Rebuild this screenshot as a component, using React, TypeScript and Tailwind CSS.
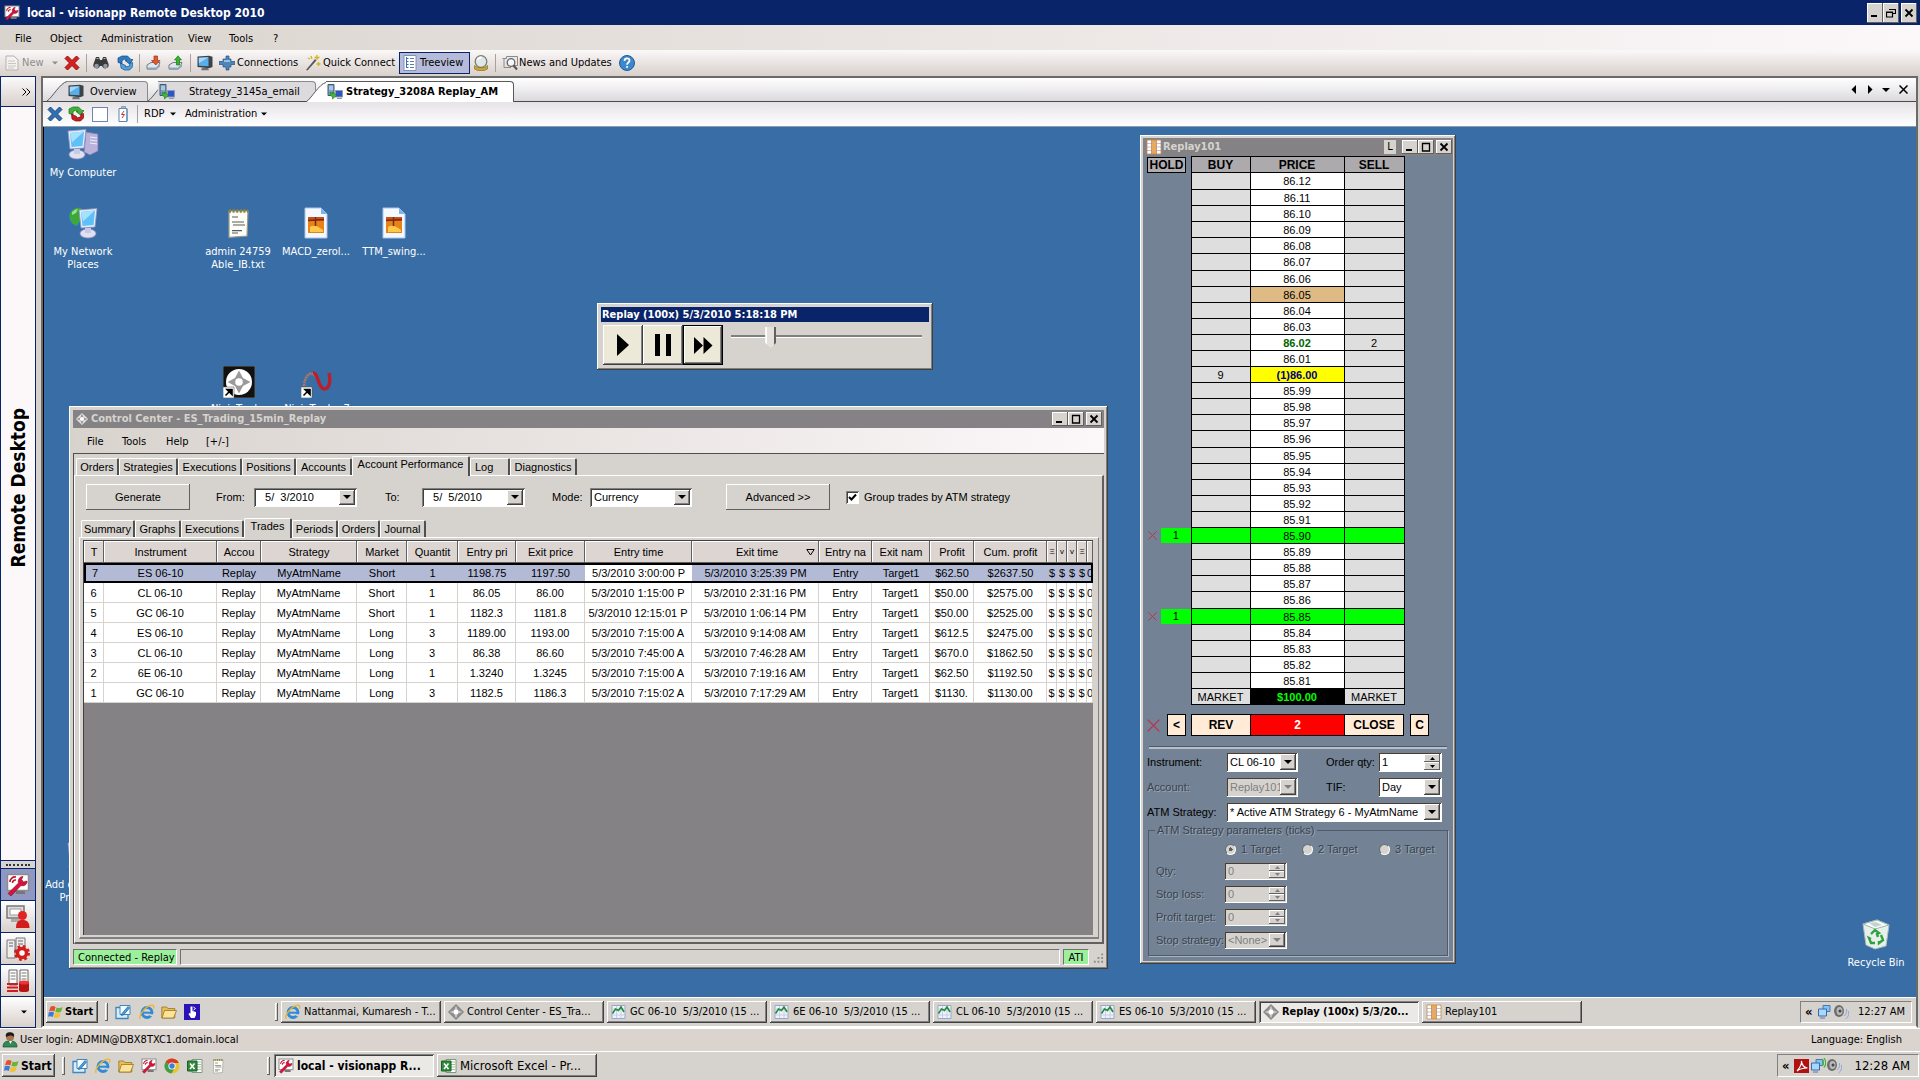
import type { ReactNode } from "react";

const raised =
  "shadow-[inset_-1px_-1px_0_#404040,inset_1px_1px_0_#ffffff,inset_-2px_-2px_0_#808080]";
const thinRaised = "shadow-[inset_-1px_-1px_0_#606060,inset_1px_1px_0_#ffffff]";
const sunken =
  "shadow-[inset_1px_1px_0_#808080,inset_-1px_-1px_0_#ffffff,inset_2px_2px_0_#404040]";
const sans = "font-[family-name:'Liberation_Sans',Arial,sans-serif]";
const emboss = "text-[#39424e] [text-shadow:1px_1px_0_#9aa6b5]";

/* ---------- icons ---------- */

function Svg({ size = 16, box = 16, children }: { size?: number; box?: number; children: ReactNode }) {
  return (
    <svg width={size} height={size} viewBox={`0 0 ${box} ${box}`} className="shrink-0" aria-hidden="true">
      {children}
    </svg>
  );
}

const WrenchIcon = ({ size = 16 }: { size?: number }) => (
  <Svg size={size} box={24}>
    <rect x="1.5" y="1.5" width="21" height="16" fill="#fff" stroke="#8d8d8d" strokeWidth="1.5" />
    <path d="M10 18h9v3h-9z" fill="#777" />
    <path d="M4 9a5 5 0 0 1 6-5M6.500 10a3 3 0 0 1 3.500-3" fill="none" stroke="#c8102e" strokeWidth="1.6" />
    <path d="M2 20.500 12.500 10c-1-3 1-6.500 4.500-6.500l-1.500 3 2 2.500 3.500-1c.5 3.500-3 5.500-6 4.500L5 23z" fill="#d4143c" stroke="#8d0a22" strokeWidth=".6" />
  </Svg>
);
const PageIcon = () => (
  <Svg>
    <path d="M2 1h8l4 4v10H2z" fill="#f4f2f1" stroke="#b5b1ae" />
    <path d="M4 6h7M4 8.500h8M4 11h8M4 13h6" stroke="#c9c5c2" />
  </Svg>
);
const CrossIcon = ({ color, edge }: { color: string; edge: string }) => (
  <Svg>
    <path d="M1 3.500 3.500 1 8 5.500 12.500 1 15 3.500 10.500 8l4.500 4.500-2.500 2.500L8 10.500 3.500 15 1 12.500 5.500 8z" fill={color} stroke={edge} />
  </Svg>
);
const BinocularsIcon = () => (
  <Svg>
    <path d="M3 2h3l1 3h2l1-3h3l2.500 7a3.300 3.300 0 1 1-6.500 2h-2a3.300 3.300 0 1 1-6.500-2z" fill="#3a3a3c" />
    <circle cx="3.600" cy="11" r="2.200" fill="#8d99a5" /><circle cx="12.400" cy="11" r="2.200" fill="#8d99a5" />
    <path d="M3.500 3.500h2M10.500 3.500h2" stroke="#b8b8b8" />
  </Svg>
);
const RefreshIcon = () => (
  <Svg>
    <path d="M1 7.500V3l4-2h5.500L14 4.500h2L12.500 9 8 5.500h2L8 4 5 5.500v3z" fill="#2c7cc4" stroke="#134a84" strokeWidth=".7" />
    <path d="M3.500 8l5 2.500V12l4-1 .5-3 2.500-.5.500 4-3.500 3.500H7.500L4 13z" fill="#4fa2e2" stroke="#134a84" strokeWidth=".7" />
  </Svg>
);
const ReconnectIcon = () => (
  <Svg>
    <path d="M1 7.500V3l4-2h5.500L14 4.500h2L12.500 9 8 5.500h2L8 4 5 5.500v3z" fill="#3fb23a" stroke="#1b6d18" strokeWidth=".7" />
    <path d="M3.500 8l5 2.500V12l4-1 .5-3 2.500-.5.500 4-3.500 3.500H7.500L4 13z" fill="#c9211e" stroke="#7b0b0b" strokeWidth=".7" />
  </Svg>
);
const TrayIcon = ({ up }: { up?: boolean }) => (
  <Svg>
    <path d="M1 10l4-2.500h9l-2 4.500-2 2H1z" fill="#dfe6ec" stroke="#6f7b86" />
    <path d="M1 12.500h9l4-4v3l-4 3.500H1z" fill="#8fa6ba" />
    {up ? (
      <path d="M8.500 10V5H6.500L10 .8 13.500 5h-2v5z" fill="#37b52e" stroke="#1c7a17" strokeWidth=".7" />
    ) : (
      <path d="M8 1h3.500v4.500H14L9.800 10 5.500 5.500H8z" fill="#e2582a" stroke="#9a3512" strokeWidth=".7" />
    )}
  </Svg>
);
const MonitorIcon = () => (
  <Svg>
    <path d="M.5 1.500 12 .8l3.500 1V12l-3.500 1.200L.5 12z" fill="#3c4248" />
    <path d="M1.800 2.800l9.700-.5v9L1.800 10.800z" fill="#58aee8" />
    <path d="M1.800 2.800l9.700-.5-9.700 6z" fill="#a8d8f8" />
    <path d="M5 13h6l1 2.200H4z" fill="#6c7278" />
  </Svg>
);
const PlugIcon = () => (
  <Svg>
    <path d="M0 6.500h4V4h3V1h3v3h2v2.500h4v3h-4V12h-2v3H7v-3H4V9.500H0z" fill="#4f86b8" stroke="#2a5480" strokeWidth=".7" />
    <path d="M5 6h6" stroke="#b5d3ec" strokeWidth="1.500" />
  </Svg>
);
const WandIcon = () => (
  <Svg>
    <path d="M1 15 10 4l1.500 1.500L2.500 15.500z" fill="#5a5a5a" />
    <path d="M12 0v5M9.500 2.500h5M6 1l1 3M13.500 7v4M11.500 9h4M3 3l2 1" stroke="#d3b21c" strokeWidth="1.300" />
  </Svg>
);
const TreeIcon = () => (
  <Svg>
    <path d="M2 .5h12v15H2z" fill="#fff" stroke="#7d93b8" />
    <path d="M4.500 2v11M4.500 3.500h2M4.500 6.500h2M4.500 9.500h2M4.500 12.500h2" stroke="#3b6fb5" />
    <path d="M8 3.500h4M8 6.500h4M8 9.500h4M8 12.500h4" stroke="#5f7fa8" />
  </Svg>
);
const BulbIcon = () => (
  <Svg>
    <circle cx="8" cy="6.500" r="5.800" fill="#dde7ea" stroke="#7b7d70" strokeWidth="1.300" />
    <path d="M4.500 5a4 4 0 0 1 4-2.500" stroke="#fff" strokeWidth="1.800" fill="none" />
    <path d="M1.500 10.500l3 2h7l3-2v3.500l-3 1.500h-7l-3-1.500z" fill="#c5a53a" stroke="#7f6817" strokeWidth=".6" />
  </Svg>
);
const NewsIcon = () => (
  <Svg>
    <path d="M.5 3.500h4v-2h11v9h-3" fill="#e9e9e9" stroke="#8a8a8a" />
    <path d="M2 3.500v9h7" fill="none" stroke="#8a8a8a" />
    <circle cx="9" cy="7.500" r="3.800" fill="#f5f8fa" stroke="#666" strokeWidth="1.300" />
    <path d="M11.500 10.500l3.500 4" stroke="#555" strokeWidth="2" />
  </Svg>
);
const HelpIcon = () => (
  <Svg>
    <circle cx="8" cy="8" r="7.500" fill="#3d87cc" stroke="#1f5c99" />
    <path d="M5.500 6c0-3.500 5-3.200 5-.3 0 1.800-2.500 1.900-2.500 4" fill="none" stroke="#fff" strokeWidth="1.700" />
    <rect x="7.200" y="11" width="1.800" height="1.800" fill="#fff" />
  </Svg>
);
const ServerIcon = () => (
  <Svg>
    <path d="M1 .5h6v11H1z" fill="#7ea3c4" stroke="#3b5a78" />
    <path d="M2 3h4M2 5h4" stroke="#dce9f4" />
    <path d="M8.500 6.500h7v6.500h-7z" fill="#2c55c8" stroke="#8f98ac" />
    <path d="M10 14.500h5" stroke="#8f98ac" />
    <path d="M3 8.500c0 3 1 4 2.500 4V15l4-3.500-4-3.500v2C4.500 10 4 9.500 4 8z" fill="#46b83a" stroke="#1c7417" strokeWidth=".6" />
  </Svg>
);
const DeviceIcon = () => (
  <Svg>
    <path d="M4 2.500h8v13H4z" fill="#fff" stroke="#5b89ad" />
    <path d="M6.500.5h4v2h-4z" fill="#9fc0d6" stroke="#5b89ad" strokeWidth=".7" />
    <path d="M12 3v12" stroke="#79a5c4" strokeWidth="2" />
    <path d="M9 5 6.500 8.500h3L7 12" stroke="#c33" fill="none" />
  </Svg>
);
const UserIcon = () => (
  <Svg>
    <path d="M1 15c0-5 3-6 7-6s7 1 7 6z" fill="#2e8b57" stroke="#155232" strokeWidth=".7" />
    <path d="M7 9l1.500 3L10 9z" fill="#fff" />
    <circle cx="8" cy="5" r="4" fill="#a8744a" />
    <path d="M4 5C3 1 6 0 8.500.3 12 .5 12.500 3 12 5c-2-2-5-2-8 0z" fill="#1c1c1c" />
  </Svg>
);
const FlagIcon = () => (
  <Svg>
    <path d="M2.500 2.800C4.500 1.500 6 2 7.600 3L6.300 7.500C4.800 6.500 3 6.300 1 7.300z" fill="#e4502a" />
    <path d="M8.600 3.400c2 1 4 .8 6-.4L13.200 7.600c-2 1-3.700 1.200-5.900.2z" fill="#6db33a" />
    <path d="M.8 8.300c2-1 3.800-.7 5.300.2L4.800 13C3.200 12 1.500 12 0 12.800z" fill="#3d78d8" />
    <path d="M7 8.800c2 1 4 .7 5.900-.3L11.500 13c-2 1-4 1.200-5.800.4z" fill="#f2c02e" />
  </Svg>
);
const ShowDesktopIcon = () => (
  <Svg>
    <path d="M1 3.500h12v11H1z" fill="#d8ecfa" stroke="#3f86c0" strokeWidth="1.300" />
    <path d="M5 1.500h10v9H5z" fill="#f4fbff" stroke="#3f86c0" />
    <path d="M7 9.500l6-7 1.500 1.500-6 7-2 .5z" fill="#4ea0dc" stroke="#1d5f98" strokeWidth=".7" />
  </Svg>
);
const IeIcon = () => (
  <Svg>
    <circle cx="8" cy="8.500" r="5" fill="none" stroke="#2f8ad8" strokeWidth="2.800" />
    <path d="M4 8.700h9.500" stroke="#2f8ad8" strokeWidth="2" />
    <path d="M10.500 10.200h5v2h-4z" fill="#d6d3ce" />
    <path d="M1.200 14.800C-.8 12 6 2.500 12.500 1.200c3-.4 2.500 2 1.800 3.400" fill="none" stroke="#eeb32c" strokeWidth="1.300" />
  </Svg>
);
const FolderIcon = () => (
  <Svg>
    <path d="M.8 3h5l1 1.500h7V14H.8z" fill="#e9bd55" stroke="#9c7420" strokeWidth=".8" />
    <path d="M3.500 6.500h12L12.500 14H1z" fill="#fbe39a" stroke="#9c7420" strokeWidth=".8" />
  </Svg>
);
const HandIcon = () => (
  <Svg>
    <path d="M0 0h16v16H0z" fill="#2a12b8" />
    <path d="M6.500 2.500h2V7l3.500 1v3l-1.500 3H7L4.500 10l1-1 1 .5z" fill="#fff" />
    <path d="M9.500 3l2 1.500-2 1.500" fill="none" stroke="#fff" />
  </Svg>
);
const ChromeIcon = () => (
  <Svg>
    <circle cx="8" cy="8" r="7.500" fill="#e8c52c" />
    <path d="M8 8 1.500 4.200A7.500 7.500 0 0 1 14.800 5H8z" fill="#d83a2c" />
    <path d="M8 8 1.500 4.200A7.500 7.500 0 0 0 7.500 15.500L10.500 10z" fill="#3f9f48" />
    <circle cx="8" cy="8" r="3.600" fill="#fff" /><circle cx="8" cy="8" r="2.700" fill="#3e7de0" />
  </Svg>
);
const ExcelIcon = () => (
  <Svg>
    <path d="M5 1.500h10v13H5z" fill="#fff" stroke="#7d9a7d" />
    <path d="M10 4h4M10 6.500h4M10 9h4M10 11.500h4" stroke="#9cc39c" />
    <path d="M.5 3h9.500v10H.5z" fill="#2f8a3a" stroke="#1d5e26" />
    <path d="M3 5.500l4.500 5.500M7.500 5.500 3 11" stroke="#fff" strokeWidth="1.500" />
  </Svg>
);
const NotepadIcon = ({ size = 16 }: { size?: number }) => (
  <Svg size={size}>
    <path d="M3.500 2h9.500l-.5 12.500-9 .7z" fill="#fdfdf8" stroke="#9a9a90" strokeWidth=".6" />
    <path d="M3.500 2h9.500" stroke="#8d8432" strokeWidth="1.800" strokeDasharray="1 .8" />
    <path d="M5 5h3M5 7.500h6M5.500 9h6M5 11.800h5M5 13h3" stroke="#5a5a5a" strokeWidth=".6" />
  </Svg>
);
const DiamondIcon = ({ size = 16, light }: { size?: number; light?: boolean }) => (
  <Svg size={size}>
    <path d="M8 .5 15.500 8 8 15.500.5 8z" fill={light ? "#e4e2e0" : "#8f8f8f"} stroke="#5f5f5f" strokeWidth=".6" />
    <path d="M8 1.500 9.800 6.200 14.500 8 9.800 9.800 8 14.500 6.200 9.800 1.500 8 6.200 6.200z" fill={light ? "#9a9a9a" : "#c9c9c9"} />
    <circle cx="8" cy="8" r="2.400" fill="#fff" />
  </Svg>
);
const ChartIcon = () => (
  <Svg>
    <path d="M1 1.500h13v13H1z" fill="#eef2fb" stroke="#9aa7c8" />
    <path d="M1 5h13M1 11h13M5.500 2v12M10 2v12" stroke="#bcc8e6" strokeWidth=".8" />
    <path d="M1.500 9.500 4.500 5l3 1.500L10 3l3 5" fill="none" stroke="#238a3a" strokeWidth="1.600" />
  </Svg>
);
const LadderIcon = () => (
  <Svg>
    <path d="M1 1h14v14H1z" fill="#fff" />
    <path d="M5.500 1h5v14h-5z" fill="#f3a64a" />
    <path d="M1 4.500h14M1 8h14M1 11.500h14" stroke="#b8b0c8" strokeWidth=".8" />
    <path d="M5.500 1v14M10.500 1v14M1 1h14v14H1z" stroke="#c08a50" strokeWidth=".8" fill="none" />
  </Svg>
);
const NetworkTrayIcon = ({ waves }: { waves?: boolean }) => (
  <Svg>
    <path d="M6 1.500h7v6H6z" fill="#7fc4f2" stroke="#4b77b8" />
    <path d="M1.500 5h8v7h-8z" fill="#a5dbfa" stroke="#3f66b0" />
    <path d="M3 13h5v2H3z" fill="#9aa3c0" />
    {waves && <path d="M12 1c1.500 2 1.500 5 0 7M14 0c2 3 2 7 0 9.500" stroke="#39b52f" fill="none" strokeWidth="1.200" />}
  </Svg>
);
const SpeakerIcon = () => (
  <Svg>
    <ellipse cx="6" cy="7" rx="5" ry="6" fill="#6d6d6d" />
    <ellipse cx="6.500" cy="7" rx="3" ry="4" fill="#b9b9b9" /><circle cx="7" cy="7" r="1.500" fill="#444" />
    <path d="M11 12c2-1 3-4 2.500-7M12.500 15c3-2 3.500-5 3-8" stroke="#8da4dc" fill="none" />
  </Svg>
);
const PdfIcon = () => (
  <Svg>
    <path d="M0 1h15v14H0z" fill="#b01212" />
    <path d="M3 13c3-3 5-8 4.500-10 0 4 3 7 6 7-4 0-8 1-10.500 3z" fill="none" stroke="#fff" strokeWidth="1.200" />
  </Svg>
);
const ComputerIcon = ({ globe }: { globe?: boolean }) => (
  <Svg size={32} box={32}>
    {globe ? (
      <>
        <circle cx="11" cy="10" r="9.500" fill="#2a6fd0" />
        <path d="M3 6c4-6 9-6 12-4-1 4 2 5 0 9s-3 4-5 8C4 17 1 12 3 6z" fill="#3da83a" />
        <path d="M5 5c2-2 4-3 6-3l-2 4-4 2z" fill="#9be08a" />
      </>
    ) : (
      <>
        <path d="M19 4l12 2v17l-8 4-6-3z" fill="#b9b3dc" stroke="#7d78b0" strokeWidth=".8" />
        <path d="M23 9l7 1M23 12l7 1M23 15l7 1" stroke="#f0eefc" />
      </>
    )}
    <g transform={globe ? "translate(1 0)" : "translate(-10 0)"}>
      <path d="M11 3 29 1.500 27 20 13 21z" fill="#e6ebf8" stroke="#8b96c4" strokeWidth=".8" />
      <path d="M13 5l14-1.500L25.500 18 14.500 19z" fill="#5ec0f6" />
      <path d="M13 5l14-1.500-12 11z" fill="#a5e0fc" />
    </g>
    <ellipse cx={globe ? 21 : 10} cy="26.500" rx="8" ry="4.500" fill="#dfe0f2" stroke="#8f90bc" strokeWidth=".8" />
    <path d="M7 21h6v5H7z" transform={globe ? "translate(11 0)" : ""} fill="#c8c9e4" />
  </Svg>
);
const ImageFileIcon = () => (
  <Svg size={32} box={32}>
    <path d="M5 1h16l6 6v24H5z" fill="#f4f8ff" stroke="#a9c4ec" />
    <path d="M21 1v6h6z" fill="#7fb2ee" />
    <path d="M8 10h16v16H8z" fill="#e8801c" />
    <path d="M8 10h16v4H8z" fill="#c8501a" /><path d="M10 20c4-3 9 0 13 3v2H10z" fill="#fbc94a" />
    <path d="M8 13.500l16-1M15.500 10v9" stroke="#7b2a10" strokeWidth="1.500" />
  </Svg>
);
const ShortcutBadge = () => (
  <>
    <path d="M0 21h11v11H0z" fill="#fff" stroke="#555" strokeWidth=".6" />
    <path d="M2.500 29.500l4-4M4 23.500h5v5z" stroke="#000" strokeWidth="1.600" />
  </>
);
const NinjaIcon = () => (
  <Svg size={32} box={32}>
    <path d="M0 0h32v32H0z" fill="#111" stroke="#a89a7a" strokeWidth=".6" />
    <circle cx="16" cy="16" r="13" fill="#fff" />
    <path d="M16 4.500 20 12l7.500 4-7.500 4-4 7.500-4-7.500L4.500 16l7.500-4z" fill="#9a9a9a" />
    <circle cx="16" cy="16" r="3.800" fill="#fff" />
    <ShortcutBadge />
  </Svg>
);
const SwirlIcon = () => (
  <Svg size={32} box={32}>
    <path d="M3 20C4 8 11 4 15 11" fill="none" stroke="#a8786a" strokeWidth="2.600" strokeDasharray="2 .6" />
    <path d="M12 7c5-1 5 15 11 16 5 0 7-6 5-16" fill="none" stroke="#b8202a" strokeWidth="3.400" />
    <ShortcutBadge />
  </Svg>
);
const RecycleIcon = () => (
  <Svg size={32} box={32}>
    <path d="M3 6 17 2l12 5-3 21-11 3-9-4z" fill="#e8f0ee" stroke="#a9bdb8" />
    <path d="M3 6l12 5 14-4-12-5z" fill="#f9fdfc" stroke="#9fb3ae" />
    <path d="M9 5l7-1 6 3-7 2z" fill="#c2d4cf" />
    <path d="M11 16l4-4 4 3-2 1 1 3M21 17l2 5-4 3v-2M15 25h-4l-2-5 2 1" fill="none" stroke="#2fa33a" strokeWidth="2.400" />
  </Svg>
);
const SideUserIcon = () => (
  <Svg size={24} box={24}>
    <path d="M1 1h17v12H1z" fill="#ddd" stroke="#777" strokeWidth="1.500" /><path d="M4 4h11v6H4z" fill="#fff" stroke="#999" />
    <path d="M5 14h9v3H5z" fill="#aaa" />
    <circle cx="16.500" cy="10.500" r="4.500" fill="#e02424" /><path d="M10 23c0-7 3-8 6.500-8s7 1 7 8z" fill="#d31c1c" />
  </Svg>
);
const SideGearIcon = () => (
  <Svg size={24} box={24}>
    <path d="M1 3h8v18H1zM10 1h9v12h-9z" fill="#eee" stroke="#777" /><path d="M3 6h4M3 9h4M12 4h5M12 7h5" stroke="#666" />
    <circle cx="16" cy="16" r="6.500" fill="none" stroke="#d31c1c" strokeWidth="3" strokeDasharray="2.600 2.500" />
    <circle cx="16" cy="16" r="4.500" fill="#fff" stroke="#d31c1c" strokeWidth="3.500" />
  </Svg>
);
const SideDataIcon = () => (
  <Svg size={24} box={24}>
    <path d="M3 1h8v15H3zM14 1h8v15h-8z" fill="#fff" stroke="#666" />
    <path d="M4.500 4h5M4.500 7h5M4.500 10h5M15.500 4h5M15.500 7h5M15.500 10h5" stroke="#777" />
    <path d="M1 15h11M1 18.500h11M1 22h11" stroke="#d31c1c" strokeWidth="2" />
    <path d="M13 13.500v8c0 2 10 2 10 0v-8z" fill="#b81414" /><ellipse cx="18" cy="13.500" rx="5" ry="2" fill="#e33" />
  </Svg>
);

function Caret({ wide }: { wide?: boolean }) {
  return (
    <svg width={wide ? 8 : 6} height="4" viewBox="0 0 8 4" className="shrink-0" aria-hidden="true">
      <path d="M0 0h8L4 4z" fill="currentColor" />
    </svg>
  );
}

/* ---------- small controls ---------- */

function WinBtn({ kind, className = "" }: { kind: "min" | "max" | "restore" | "close"; className?: string }) {
  return (
    <button aria-label={kind} className={`flex h-full w-4 items-center justify-center bg-[#d6d3ce] ${thinRaised} ${className}`}>
      <svg width="10" height="10" viewBox="0 0 10 10" fill="none" stroke="#000" aria-hidden="true">
        {kind === "min" && <path d="M1 8h6" strokeWidth="2" />}
        {kind === "max" && <path d="M1 1.500h8M1.500 1v8h7V1" strokeWidth="1.300" />}
        {kind === "restore" && <path d="M3 1.500h6.500v4H7M.5 4h6v5h-6zM.5 4.500h6" strokeWidth="1.200" />}
        {kind === "close" && <path d="M1.500 1.500l7 7M8.500 1.500l-7 7" strokeWidth="1.800" />}
      </svg>
    </button>
  );
}

function Drop({ label, value, disabled, className }: { label: string; value: string; disabled?: boolean; className: string }) {
  return (
    <div className={`relative shrink-0 p-0.5 ${sunken} ${disabled ? "bg-[#d6d3ce]" : "bg-white"} ${className}`}>
      <select aria-label={label} disabled={disabled} className={`block h-full w-full appearance-none pl-0.5 pr-3.5 ${disabled ? "text-[#808080]" : "text-black"}`}>
        <option>{value}</option>
      </select>
      <span className={`pointer-events-none absolute inset-y-0.5 right-0.5 flex w-4 items-center justify-center bg-[#d6d3ce] ${raised} ${disabled ? "text-[#808080]" : "text-black"}`}>
        <Caret wide />
      </span>
    </div>
  );
}

function Spin({ id, value, disabled, className }: { id: string; value: string; disabled?: boolean; className: string }) {
  return (
    <div className={`flex shrink-0 p-0.5 ${sunken} ${disabled ? "bg-[#d6d3ce] text-[#808080]" : "bg-white text-black"} ${className}`}>
      <input id={id} disabled={disabled} defaultValue={value} className="w-0 min-w-0 flex-1 pl-0.5" />
      <span className="flex w-4 flex-col">
        <button aria-label="Increase" disabled={disabled} className={`flex flex-1 items-center justify-center bg-[#d6d3ce] ${thinRaised}`}>
          <svg width="5" height="3" viewBox="0 0 5 3"><path d="M0 3h5L2.500 0z" fill="currentColor" /></svg>
        </button>
        <button aria-label="Decrease" disabled={disabled} className={`flex flex-1 items-center justify-center bg-[#d6d3ce] ${thinRaised}`}>
          <svg width="5" height="3" viewBox="0 0 5 3"><path d="M0 0h5L2.500 3z" fill="currentColor" /></svg>
        </button>
      </span>
    </div>
  );
}

function DateBox({ id, value }: { id: string; value: string }) {
  return (
    <div className={`flex h-[19px] w-[103px] shrink-0 bg-white p-0.5 ${sunken}`}>
      <input id={id} defaultValue={value} className="w-0 min-w-0 flex-1 whitespace-pre pl-1.5" />
      <button aria-label="Open calendar" className={`flex w-4 items-center justify-center bg-[#d6d3ce] ${raised}`}><Caret wide /></button>
    </div>
  );
}

const ToolSep = ({ className }: { className: string }) => <span className={`h-[18px] w-px shrink-0 bg-[#a9a29c] ${className}`} />;

/* ---------- main application chrome ---------- */

function TopChrome() {
  return (
    <header className="shrink-0">
      <div className="flex h-[25px] items-center bg-[#0a246a] pl-1 pr-[3px]">
        <WrenchIcon />
        <h1 className="ml-[7px] whitespace-nowrap text-[12px] font-bold text-white">local - visionapp Remote Desktop 2010</h1>
        <div className="ml-auto flex h-5">
          <WinBtn kind="min" /><WinBtn kind="restore" /><WinBtn kind="close" className="ml-[2px]" />
        </div>
      </div>
      <nav className="flex h-[25px] items-center bg-linear-to-r from-[#dad4ce] to-[#fcf7f9] pl-[15px] pt-0.5">
        <button className="w-[35px] text-left">File</button>
        <button className="w-[51px] text-left">Object</button>
        <button className="w-[87px] text-left">Administration</button>
        <button className="w-[41px] text-left">View</button>
        <button className="w-11 text-left">Tools</button>
        <button className="text-left">?</button>
      </nav>
      <div className="flex h-[26px] items-center whitespace-nowrap bg-linear-to-b from-[#fbf8f9] to-[#d8d0cb] pb-px pl-1">
        <button className="flex w-[60px] items-center gap-[2px] text-[#8d8d8d]"><PageIcon />New<span className="ml-1.5"><Caret /></span></button>
        <button aria-label="Delete"><CrossIcon color="#d8201e" edge="#8e0f0f" /></button>
        <ToolSep className="mx-[6px]" />
        <button aria-label="Find" className="w-6"><BinocularsIcon /></button>
        <button aria-label="Refresh"><RefreshIcon /></button>
        <ToolSep className="mx-[6px]" />
        <button aria-label="Import" className="w-[22px]"><TrayIcon /></button>
        <button aria-label="Export"><TrayIcon up /></button>
        <ToolSep className="mx-[6px]" />
        <button aria-label="Monitor" className="w-[22px]"><MonitorIcon /></button>
        <button className="flex w-[86px] items-center gap-0.5"><PlugIcon />Connections</button>
        <button className="flex w-[94px] items-center gap-0.5"><WandIcon />Quick Connect</button>
        <button className="flex h-[22px] w-[71px] items-center gap-0.5 border border-[#0a246a] bg-[#b5bbd8] pl-[2px]"><TreeIcon />Treeview</button>
        <button aria-label="Tips" className="ml-[3px]"><BulbIcon /></button>
        <ToolSep className="mx-[6px]" />
        <button className="flex w-[117px] items-center gap-px"><NewsIcon />News and Updates</button>
        <button aria-label="Help"><HelpIcon /></button>
      </div>
    </header>
  );
}

function SideBar() {
  return (
    <aside className="flex w-9 shrink-0 flex-col border-x border-[#0a246a] bg-[#fcf8fa]">
      <button className="flex h-[31px] items-center justify-end border-y border-[#0a246a] bg-linear-to-b from-[#fbf9fa] to-[#d8d0cb] pr-1" aria-label="Expand">
        <svg width="9" height="8" viewBox="0 0 9 8" fill="none" stroke="#000"><path d="M.5.5 4 4 .5 7.500M4.500.5 8 4 4.500 7.500" /></svg>
      </button>
      <div className="flex flex-1 items-center justify-center pt-2">
        <span className="rotate-180 whitespace-nowrap text-[19px] font-bold leading-[24px] [writing-mode:vertical-rl]">Remote Desktop</span>
      </div>
      <div className="flex h-2 items-center justify-center border-t border-[#0a246a] bg-[#d8d4d2]">
        <span className="w-6 border-t-2 border-dotted border-[#333]" />
      </div>
      <button aria-label="Connections" className="flex h-8 items-center justify-center border-t border-[#0a246a] bg-[#8e98c2]"><WrenchIcon size={24} /></button>
      <button aria-label="Credentials" className="flex h-8 items-center justify-center border-t border-[#0a246a] bg-linear-to-b from-white to-[#d8d0cb]"><SideUserIcon /></button>
      <button aria-label="Settings" className="flex h-8 items-center justify-center border-t border-[#0a246a] bg-linear-to-b from-white to-[#d8d0cb]"><SideGearIcon /></button>
      <button aria-label="Inventory" className="flex h-8 items-center justify-center border-t border-[#0a246a] bg-linear-to-b from-white to-[#d8d0cb]"><SideDataIcon /></button>
      <button aria-label="More" className="flex h-8 items-center justify-end border-y border-[#0a246a] bg-linear-to-b from-white to-[#d8d0cb] pr-2"><Caret /></button>
    </aside>
  );
}

function Slant({ active }: { active?: boolean }) {
  return (
    <svg width="20" height="20" viewBox="0 0 20 20" className="shrink-0" aria-hidden="true">
      <path d="M0 20C6 16 12 2 20 .5V20z" fill={active ? "#ffffff" : "#dcdadd"} />
      <path d="M0 20C5 17 13 2 20 .5" fill="none" stroke="#5a5a5a" />
    </svg>
  );
}

function SessionTabs() {
  return (
    <div className="flex h-6 items-end border-b border-[#4a4a4a] bg-linear-to-b from-white to-[#dcd9dd] pl-1">
      <button className="flex h-5 w-[101px] items-center whitespace-nowrap">
        <Slant />
        <span className="flex h-5 flex-1 items-center gap-1.5 rounded-tr border-r border-t border-[#8a8a8a] bg-[#dcdadd] pl-px"><MonitorIcon />Overview</span>
      </button>
      <button className="flex h-5 w-[168px] items-center whitespace-nowrap">
        <span className="-mr-2.5 h-5"><Slant /></span>
        <span className="z-10 flex h-5 flex-1 items-center gap-3.5 rounded-tr border-r border-t border-[#8a8a8a] bg-[#dcdadd] pl-px"><ServerIcon />Strategy_3145a_email</span>
      </button>
      <button className="z-20 -mb-px -ml-2.5 flex h-[21px] w-[208px] items-center whitespace-nowrap font-bold">
        <Slant active />
        <span className="flex h-[21px] flex-1 items-center gap-[3px] rounded-tr border-r border-t border-[#5a5a5a] bg-white pl-px"><ServerIcon />Strategy_3208A Replay_AM</span>
      </button>
      <div className="ml-auto flex h-full items-center gap-[9px] pr-2">
        <button aria-label="Previous tab"><svg width="5" height="9" viewBox="0 0 5 9"><path d="M5 0v9L.5 4.500z" /></svg></button>
        <button aria-label="Next tab" className="ml-[3px]"><svg width="5" height="9" viewBox="0 0 5 9"><path d="M0 0v9l4.500-4.500z" /></svg></button>
        <button aria-label="Tab list"><Caret wide /></button>
        <button aria-label="Close tab"><svg width="9" height="9" viewBox="0 0 9 9" stroke="#000" strokeWidth="1.500"><path d="M.5.5l8 8M8.500.5l-8 8" /></svg></button>
      </div>
    </div>
  );
}

function SessionTools() {
  return (
    <div className="flex h-[25px] items-center border-b border-[#8f9db0] bg-linear-to-b from-[#e6e3e7] to-white pl-1">
      <button aria-label="Disconnect" className="w-[21px]"><CrossIcon color="#2f6fb4" edge="#1b477b" /></button>
      <button aria-label="Reconnect" className="w-6"><ReconnectIcon /></button>
      <button aria-label="Full screen" className="h-[15px] w-4 border border-[#6f86b0] bg-white" />
      <button aria-label="Device" className="ml-[7px]"><DeviceIcon /></button>
      <ToolSep className="ml-1.5 mr-1.5" />
      <button className="flex w-[41px] items-center gap-1.5">RDP<Caret /></button>
      <button className="flex items-center gap-1 whitespace-nowrap">Administration<Caret /></button>
    </div>
  );
}

/* ---------- desktop ---------- */

function DeskIcon({ className, icon, lines, tight }: { className: string; icon: ReactNode; lines: string[]; tight?: boolean }) {
  return (
    <a href="#" className={`absolute flex w-20 flex-col items-center text-center leading-[13px] text-white ${tight ? "gap-1" : "gap-1.5"} ${className}`}>
      {icon}
      <span className="whitespace-nowrap">
        {lines.map((l) => <span key={l} className="block">{l}</span>)}
      </span>
    </a>
  );
}

function ReplayBar() {
  return (
    <section className={`absolute left-[553px] top-44 flex h-[67px] w-[336px] flex-col bg-[#d6d3ce] p-1 ${raised}`}>
      <h2 className="h-[15px] bg-[#0a246a] pl-px font-bold leading-[15px] text-white">Replay (100x) 5/3/2010 5:18:18 PM</h2>
      <div className="mt-[3px] flex pl-0.5">
        <button aria-label="Play" className={`flex h-10 w-10 items-center justify-center bg-[#ece9d8] ${raised}`}>
          <svg width="14" height="22" viewBox="0 0 14 22"><path d="M1 0v22l12-11z" /></svg>
        </button>
        <button aria-label="Pause" className={`flex h-10 w-10 items-center justify-center bg-[#ece9d8] ${raised}`}>
          <svg width="16" height="22" viewBox="0 0 16 22"><path d="M0 0h5v22H0zM11 0h5v22h-5z" /></svg>
        </button>
        <button aria-label="Fast forward" className={`flex h-10 w-10 items-center justify-center border border-black bg-[#ece9d8] ${raised}`}>
          <svg width="19" height="17" viewBox="0 0 19 17"><path d="M0 0v17l9-8.500zM9.500 0v17l9-8.500z" /></svg>
        </button>
        <input
          type="range"
          aria-label="Replay speed"
          defaultValue={19}
          className="ml-2 mt-0.5 h-[21px] w-[191px] appearance-none bg-[linear-gradient(#808080,#808080),linear-gradient(#ffffff,#ffffff)] bg-[length:100%_2px,100%_3px] bg-[position:0_8px,0_8px] bg-no-repeat [&::-webkit-slider-thumb]:h-[21px] [&::-webkit-slider-thumb]:w-[11px] [&::-webkit-slider-thumb]:appearance-none [&::-webkit-slider-thumb]:bg-[linear-gradient(90deg,#ffffff_0px,#ffffff_2px,#e4e1dc_2px,#e4e1dc_9px,#606060_9px,#606060_11px)] [&::-webkit-slider-thumb]:[clip-path:polygon(0_0,100%_0,100%_75%,50%_100%,0_75%)]"
        />
      </div>
    </section>
  );
}

const mainTabs: [string, string][] = [
  ["Orders", "w-[43px]"], ["Strategies", "w-[59px]"], ["Executions", "w-16"], ["Positions", "w-[54px]"],
  ["Accounts", "w-14"], ["Account Performance", "w-[118px]"], ["Log", "w-10"], ["Diagnostics", "w-[67px]"],
];
const subTabs: [string, string][] = [
  ["Summary", "w-[54px]"], ["Graphs", "w-[46px]"], ["Executions", "w-[63px]"], ["Trades", "w-12"],
  ["Periods", "w-[46px]"], ["Orders", "w-[42px]"], ["Journal", "w-[46px]"],
];

function TabRow({ tabs, active }: { tabs: [string, string][]; active: string }) {
  return (
    <div role="tablist" className="flex h-[19px] items-end">
      {tabs.map(([t, w]) => {
        const on = t === active;
        return (
          <button
            key={t}
            role="tab"
            aria-selected={on}
            className={`shrink-0 whitespace-nowrap rounded-t-xs border-l border-r-2 border-t border-l-white border-r-[#505050] border-t-white bg-[#d6d3ce] ${w} ${on ? "z-10 -mb-px h-5 pb-1" : "h-[17px]"} ${t === "Log" ? "pl-1 text-left" : "text-center"} leading-[15px]`}
          >
            {t}
          </button>
        );
      })}
    </div>
  );
}

const cols = ["T", "Instrument", "Accou", "Strategy", "Market", "Quantit", "Entry pri", "Exit price", "Entry time", "Exit time", "Entry na", "Exit nam", "Profit", "Cum. profit", "Ξ", "v", "v", "Ξ", ""];
const colWidths = ["w-5", "w-[113px]", "w-11", "w-24", "w-[50px]", "w-[51px]", "w-[58px]", "w-[69px]", "w-[107px]", "w-[127px]", "w-[53px]", "w-[58px]", "w-11", "w-[73px]", "w-2.5", "w-2.5", "w-2.5", "w-2.5", "w-1.5"];
const trades = [
  ["7", "ES 06-10", "Short", "1", "1198.75", "1197.50", "5/3/2010 3:00:00 P", "5/3/2010 3:25:39 PM", "$62.50", "$2637.50"],
  ["6", "CL 06-10", "Short", "1", "86.05", "86.00", "5/3/2010 1:15:00 P", "5/3/2010 2:31:16 PM", "$50.00", "$2575.00"],
  ["5", "GC 06-10", "Short", "1", "1182.3", "1181.8", "5/3/2010 12:15:01 P", "5/3/2010 1:06:14 PM", "$50.00", "$2525.00"],
  ["4", "ES 06-10", "Long", "3", "1189.00", "1193.00", "5/3/2010 7:15:00 A", "5/3/2010 9:14:08 AM", "$612.5", "$2475.00"],
  ["3", "CL 06-10", "Long", "3", "86.38", "86.60", "5/3/2010 7:45:00 A", "5/3/2010 7:46:28 AM", "$670.0", "$1862.50"],
  ["2", "6E 06-10", "Long", "1", "1.3240", "1.3245", "5/3/2010 7:15:00 A", "5/3/2010 7:19:16 AM", "$62.50", "$1192.50"],
  ["1", "GC 06-10", "Long", "3", "1182.5", "1186.3", "5/3/2010 7:15:02 A", "5/3/2010 7:17:29 AM", "$1130.", "$1130.00"],
];

function TradesTable() {
  return (
    <table className="w-full table-fixed border-separate border-spacing-0 whitespace-nowrap text-center">
      <colgroup>{colWidths.map((w, i) => <col key={i} className={w} />)}</colgroup>
      <thead>
        <tr className="h-[22px]">
          {cols.map((c, i) => (
            <th key={i} className={`overflow-hidden bg-[#dcd5d2] p-0 font-normal ${i >= 14 ? "text-[8px]" : ""} ${thinRaised}`}>
              {c === "Exit time" ? (
                <span className="flex items-center pl-4">
                  <span className="flex-1">{c}</span>
                  <svg width="9" height="7" viewBox="0 0 9 7" className="mr-1" fill="none" stroke="#000"><path d="M.8.5h7.400L4.500 6z" /></svg>
                </span>
              ) : c}
            </th>
          ))}
        </tr>
      </thead>
      <tbody>
        {trades.map((t, r) => {
          const cells = [t[0], t[1], "Replay", "MyAtmName", t[2], t[3], t[4], t[5], t[6], t[7], "Entry", "Target1", t[8], t[9], "$", "$", "$", "$", "0"];
          return (
            <tr key={t[0]} className="h-5">
              {cells.map((c, i) => (
                <td
                  key={i}
                  className={
                    r === 0
                      ? `overflow-hidden border-y-2 border-black p-0 ${i === 0 ? "border-l-2" : ""} ${i === 18 ? "border-r-2" : ""} ${i === 8 ? "bg-white" : "bg-[#b3bad6]"}`
                      : "overflow-hidden border-b border-r border-[#d6d3ce] bg-white p-0"
                  }
                >
                  {c}
                </td>
              ))}
            </tr>
          );
        })}
      </tbody>
    </table>
  );
}

function ControlCenter() {
  return (
    <section className={`absolute left-[25px] top-[279px] flex h-[563px] w-[1039px] flex-col bg-[#d6d3ce] p-1 ${raised}`}>
      <div className="flex h-[18px] shrink-0 items-center bg-[#848284] px-0.5">
        <DiamondIcon size={14} light />
        <h2 className="ml-0.5 whitespace-nowrap font-bold text-[#d6d3ce]">Control Center - ES_Trading_15min_Replay</h2>
        <div className="ml-auto flex h-3.5"><WinBtn kind="min" /><WinBtn kind="max" /><WinBtn kind="close" className="ml-0.5" /></div>
      </div>
      <nav className="flex h-[25px] shrink-0 items-center bg-linear-to-r from-[#d8d3cd] to-[#fcf7f9] pl-3.5 pt-0.5">
        <button className="w-[35px] text-left">File</button>
        <button className="w-11 text-left">Tools</button>
        <button className="w-10 text-left">Help</button>
        <button className="text-left">[+/-]</button>
      </nav>
      <div className={`flex min-h-0 flex-1 flex-col border-l border-t border-[#505050] pt-0.5 ${sans}`}>
        <div className="pl-0.5"><TabRow tabs={mainTabs} active="Account Performance" /></div>
        <div className="flex min-h-0 flex-1 flex-col border-b-2 border-l border-r-2 border-t border-b-[#606060] border-l-white border-r-[#606060] border-t-white pl-1 pr-[3px]">
          <div className="flex h-[42px] shrink-0 items-center pl-[7px]">
            <button className={`h-[26px] w-[104px] ${thinRaised}`}>Generate</button>
            <label htmlFor="from" className="ml-[26px] w-[38px]">From:</label>
            <DateBox id="from" value=" 5/  3/2010" />
            <label htmlFor="to" className="ml-7 w-[37px]">To:</label>
            <DateBox id="to" value=" 5/  5/2010" />
            <span className="ml-[27px] w-[38px]">Mode:</span>
            <Drop label="Mode" value="Currency" className="h-[19px] w-[102px]" />
            <button className={`ml-[34px] h-[26px] w-[104px] ${thinRaised}`}>Advanced &gt;&gt;</button>
            <label className="ml-4 flex items-center gap-[5px]">
              <span className="relative h-[13px] w-[13px]">
                <input type="checkbox" defaultChecked className={`peer block h-[13px] w-[13px] appearance-none bg-white ${sunken}`} />
                <svg width="13" height="13" viewBox="0 0 13 13" className="pointer-events-none absolute inset-0 hidden peer-checked:block" fill="none" stroke="#000" strokeWidth="2" aria-hidden="true"><path d="M3 6l2.500 2.500L10 3.500" /></svg>
              </span>
              Group trades by ATM strategy
            </label>
          </div>
          <div className="pl-0.5"><TabRow tabs={subTabs} active="Trades" /></div>
          <div className="mb-[3px] flex min-h-0 flex-1 flex-col border-b-2 border-l border-r border-t border-b-[#808080] border-l-white border-r-[#808080] border-t-white p-0.5 pl-[3px] pr-[5px]">
            <div className="min-h-0 flex-1 overflow-hidden border-l border-t border-[#404040] bg-[#848284]">
              <TradesTable />
            </div>
          </div>
        </div>
      </div>
      <footer className="mt-1 flex h-[17px] shrink-0 items-center gap-[3px] leading-[15px]">
        <span className="h-4 w-[104px] border border-b-white border-l-[#707070] border-r-white border-t-[#707070] bg-[#9cf09c] pl-[4px]">Connected - Replay</span>
        <span className="h-4 flex-1 border border-b-white border-l-[#707070] border-r-white border-t-[#707070]" />
        <span className="h-4 w-[26px] border border-b-white border-l-[#707070] border-r-white border-t-[#707070] bg-[#9cf09c] text-center">ATI</span>
        <svg width="12" height="13" viewBox="0 0 13 13" className="mt-1"><path d="M10 1h2v2h-2zM10 5h2v2h-2zM10 9h2v2h-2zM6 5h2v2H6zM6 9h2v2H6zM2 9h2v2H2z" fill="#8f8b86" /></svg>
      </footer>
    </section>
  );
}

const prices = Array.from({ length: 32 }, (_, i) => ((8612 - i) / 100).toFixed(2));

function RedX({ size = 10 }: { size?: number }) {
  return (
    <svg width={size} height={size} viewBox="0 0 10 10" stroke="#c0304a" strokeWidth="1" aria-hidden="true"><path d="M.5.5l9 9M9.500.5l-9 9" /></svg>
  );
}

function Ladder() {
  const cell = "border border-black p-0";
  return (
    <table className="w-[261px] table-fixed border-collapse text-center leading-[14px]">
      <colgroup><col className="w-12" /><col className="w-[59px]" /><col className="w-[94px]" /><col className="w-[60px]" /></colgroup>
      <thead>
        <tr className="h-4 text-[12px]">
          <th className="p-0 pl-1 text-left"><button className="block h-4 w-[39px] border border-black bg-[#b0adb0] text-center font-bold leading-[14px]">HOLD</button></th>
          <th className={`${cell} bg-[#adaaad]`}>BUY</th>
          <th className={`${cell} bg-[#adaaad]`}>PRICE</th>
          <th className={`${cell} bg-[#adaaad]`}>SELL</th>
        </tr>
      </thead>
      <tbody>
        {prices.map((p) => {
          const order = p === "85.90" || p === "85.85";
          const tall = ["86.12", "86.07", "85.96", "85.86"].includes(p);
          const side = order ? "bg-[#00ff00]" : "bg-[#dedede]";
          const mid = order ? "bg-[#00ff00]"
            : p === "86.05" ? "bg-[#deba84]"
            : p === "86.00" ? "bg-[#ffff00] font-bold text-[#00007b]"
            : p === "86.02" ? "bg-white font-bold text-[#006500]" : "bg-white";
          return (
            <tr key={p} className={tall ? "h-[17px]" : "h-4"}>
              <td className="p-0">
                {order && (
                  <span className="flex h-[15px] items-center pl-[5px]">
                    <button aria-label={`Cancel order at ${p}`}><RedX size={9} /></button>
                    <span className="ml-1 h-[15px] flex-1 bg-[#00ff00]">1</span>
                  </span>
                )}
              </td>
              <td className={`${cell} ${side}`}>{p === "86.00" ? "9" : ""}</td>
              <td className={`${cell} ${mid}`}>{p === "86.00" ? "(1)86.00" : p}</td>
              <td className={`${cell} ${side}`}>{p === "86.02" ? "2" : ""}</td>
            </tr>
          );
        })}
        <tr className="h-4">
          <td className="p-0" />
          <td className={`${cell} bg-[#dedede]`}><button>MARKET</button></td>
          <td className={`${cell} bg-black font-bold text-[#00ff00]`}>$100.00</td>
          <td className={`${cell} bg-[#dedede]`}><button>MARKET</button></td>
        </tr>
      </tbody>
    </table>
  );
}

function ReplayWindow() {
  return (
    <section className={`absolute left-[1096px] top-2 flex h-[829px] w-[316px] flex-col bg-[#d6d3ce] p-[3px] ${raised}`}>
      <div className="flex h-[18px] shrink-0 items-center bg-[#848284] pl-[3px] pr-px">
        <LadderIcon />
        <h2 className="ml-px font-bold text-[#d6d3ce]">Replay101</h2>
        <div className="ml-auto flex h-[14px]">
          <button className="mr-1.5 w-3 bg-[#d6d3ce] leading-[14px]">L</button>
          <WinBtn kind="min" /><WinBtn kind="max" /><WinBtn kind="close" className="ml-0.5" />
        </div>
      </div>
      <div className={`flex flex-1 flex-col bg-[#738294] ${sans}`}>
        <Ladder />
        <div className="mt-[9px] flex h-[22px] items-center text-[12px] font-bold">
          <button aria-label="Cancel all" className="ml-1 w-5"><RedX size={13} /></button>
          <button className="h-full w-[19px] border border-black bg-[#ffebd6]">&lt;</button>
          <button className="ml-[5px] h-full w-[60px] border border-black bg-[#ffebd6]">REV</button>
          <button className="-ml-px h-full w-[95px] border border-black bg-[#ff0000] text-white">2</button>
          <button className="-ml-px h-full w-[60px] border border-black bg-[#ffebd6]">CLOSE</button>
          <button className="ml-[6px] h-full w-[19px] border border-black bg-[#ffebd6]">C</button>
        </div>
        <hr className="mx-1.5 mt-2.5 h-[3px] border-b-2 border-t border-b-[#b5c0ce] border-t-[#505a68]" />
        <div className="mt-[3px] flex h-5 items-center pl-1">
          <span className="w-[79px]">Instrument:</span>
          <Drop label="Instrument" value="CL 06-10" className="h-5 w-[72px]" />
          <label htmlFor="qty" className="ml-7 w-[52px] whitespace-nowrap">Order qty:</label>
          <Spin id="qty" value="1" className="h-5 w-16" />
        </div>
        <div className="mt-[5px] flex h-5 items-center pl-1">
          <span className={`w-[79px] ${emboss}`}>Account:</span>
          <Drop label="Account" value="Replay101" disabled className="h-5 w-[72px]" />
          <span className="ml-7 w-[52px]">TIF:</span>
          <Drop label="TIF" value="Day" className="h-5 w-16" />
        </div>
        <div className="mt-[5px] flex h-5 items-center pl-1">
          <span className="w-[79px] whitespace-nowrap">ATM Strategy:</span>
          <Drop label="ATM Strategy" value="* Active ATM Strategy 6 - MyAtmName" className="h-5 w-[216px]" />
        </div>
        <fieldset disabled className={`mx-[5px] mt-0.5 h-[132px] min-w-0 border border-[#505a68] shadow-[1px_1px_0_#a9b4c2] ${emboss}`}>
          <legend className="ml-1.5 px-0.5 leading-[13px]">ATM Strategy parameters (ticks)</legend>
          <div className="grid h-6 grid-cols-[77px_77px_1fr] items-center whitespace-nowrap pl-[76px]">
            {["1 Target", "2 Target", "3 Target"].map((t, i) => (
              <label key={t} className="flex items-center gap-[5px]">
                <input type="radio" name="targets" defaultChecked={i === 0} className="h-[11px] w-[11px] shrink-0 appearance-none rounded-full border border-[#606a76] border-b-white border-r-white bg-[#d6d3ce] checked:bg-[radial-gradient(#606060_2px,#d6d3ce_2px)]" />
                {t}
              </label>
            ))}
          </div>
          <div className="flex flex-col gap-[5px] pl-[7px] pt-px">
            <div className="flex h-[18px] items-center"><label htmlFor="pqty" className="w-[68px]">Qty:</label><Spin id="pqty" value="0" disabled className="h-[18px] w-[63px]" /></div>
            <div className="flex h-[18px] items-center"><label htmlFor="stop" className="w-[68px]">Stop loss:</label><Spin id="stop" value="0" disabled className="h-[18px] w-[63px]" /></div>
            <div className="flex h-[18px] items-center"><label htmlFor="profit" className="w-[68px]">Profit target:</label><Spin id="profit" value="0" disabled className="h-[18px] w-[63px]" /></div>
            <div className="flex h-[18px] items-center"><span className="w-[68px] whitespace-nowrap">Stop strategy:</span><Drop label="Stop strategy" value="<None>" disabled className="h-[18px] w-[63px]" /></div>
          </div>
        </fieldset>
      </div>
    </section>
  );
}

const tasks: { icon: ReactNode; text: string; active?: boolean }[] = [
  { icon: <IeIcon />, text: "Nattanmai, Kumaresh - T..." },
  { icon: <DiamondIcon />, text: "Control Center - ES_Tra..." },
  { icon: <ChartIcon />, text: "GC 06-10  5/3/2010 (15 ..." },
  { icon: <ChartIcon />, text: "6E 06-10  5/3/2010 (15 ..." },
  { icon: <ChartIcon />, text: "CL 06-10  5/3/2010 (15 ..." },
  { icon: <ChartIcon />, text: "ES 06-10  5/3/2010 (15 ..." },
  { icon: <DiamondIcon />, text: "Replay (100x) 5/3/20...", active: true },
  { icon: <LadderIcon />, text: "Replay101" },
];

function TaskButton({ icon, text, active, large }: { icon: ReactNode; text: string; active?: boolean; large?: boolean }) {
  return (
    <button className={`flex w-40 shrink-0 items-center gap-[3px] overflow-hidden whitespace-pre pl-1 ${large ? "text-[13px]" : ""} ${active ? `bg-[#ebe9e6] font-bold ${sunken}` : `bg-[#d6d3ce] ${raised}`}`}>
      {icon}{text}
    </button>
  );
}

function StartButton({ className }: { className: string }) {
  return (
    <button className={`flex shrink-0 items-center gap-px bg-[#d6d3ce] pl-0.5 font-bold ${raised} ${className}`}><FlagIcon />Start</button>
  );
}

const Grip = ({ className }: { className: string }) => <span className={`h-[18px] w-[3px] shrink-0 self-center bg-[#d6d3ce] ${thinRaised} ${className}`} />;

function RemoteTaskbar() {
  return (
    <div className="flex h-[29px] shrink-0 items-stretch border-t border-white bg-[#d6d3ce] pb-[3px] pl-0.5 pr-1 pt-[3px]">
      <StartButton className="w-[52px]" />
      <Grip className="ml-[7px]" />
      <div className="ml-[7px] flex w-40 shrink-0 items-center">
        <a href="#" aria-label="Show desktop" className="w-6"><ShowDesktopIcon /></a>
        <a href="#" aria-label="Internet Explorer" className="w-[22px]"><IeIcon /></a>
        <a href="#" aria-label="Explorer" className="w-[23px]"><FolderIcon /></a>
        <a href="#" aria-label="Pointer"><HandIcon /></a>
      </div>
      <Grip className="mr-[3px]" />
      <div className="flex flex-1 gap-[3px]">{tasks.map((t) => <TaskButton key={t.text} {...t} />)}</div>
      <div className="flex w-28 shrink-0 items-center border border-b-white border-l-[#808080] border-r-white border-t-[#808080] pl-1 pr-1.5">
        <span className="mr-1 text-[13px] font-bold">«</span><NetworkTrayIcon /><SpeakerIcon /><span className="ml-auto">12:27 AM</span>
      </div>
    </div>
  );
}

function HostTaskbar() {
  return (
    <footer className="flex h-[29px] shrink-0 items-stretch border-t border-white bg-[#d6d3ce] pb-[3px] pl-0.5 pr-px pt-0.5 text-[12px]">
      <StartButton className="w-[53px]" />
      <Grip className="ml-[7px]" />
      <div className="ml-[7px] flex w-[195px] shrink-0 items-center gap-[7px]">
        <a href="#" aria-label="Show desktop"><ShowDesktopIcon /></a>
        <a href="#" aria-label="Internet Explorer"><IeIcon /></a>
        <a href="#" aria-label="Explorer"><FolderIcon /></a>
        <a href="#" aria-label="visionapp"><WrenchIcon /></a>
        <a href="#" aria-label="Chrome"><ChromeIcon /></a>
        <a href="#" aria-label="Excel"><ExcelIcon /></a>
        <a href="#" aria-label="Notepad"><NotepadIcon /></a>
      </div>
      <Grip className="mr-1" />
      <div className="flex flex-1 gap-[3px]">
        <TaskButton icon={<WrenchIcon />} text="local - visionapp R..." active />
        <TaskButton icon={<ExcelIcon />} text="Microsoft Excel - Pr..." large />
      </div>
      <div className="flex w-[142px] shrink-0 items-center border border-b-white border-l-[#808080] border-r-white border-t-[#808080] pl-1 pr-2 text-[13px]">
        <span className="mr-1 font-bold">«</span><PdfIcon /><NetworkTrayIcon waves /><SpeakerIcon /><span className="ml-auto whitespace-nowrap">12:28 AM</span>
      </div>
    </footer>
  );
}

export default function App() {
  return (
    <div className="flex h-screen flex-col overflow-hidden bg-[#d8d0cb] font-[family-name:'DejaVu_Sans_Condensed','Noto_Sans',sans-serif] text-[11px] leading-[14px] text-black">
      <TopChrome />
      <div className="flex min-h-0 flex-1">
        <SideBar />
        <main className="ml-[5px] mr-0.5 flex min-w-0 flex-1 flex-col border-2 border-b-white border-l-[#6a6a6a] border-r-[#6a6a6a] border-t-[#6a6a6a]">
          <SessionTabs />
          <SessionTools />
          <div className="flex min-h-0 flex-1 flex-col border-l border-black">
            <div className="relative min-h-0 flex-1 overflow-hidden bg-[#396da5]">
              <DeskIcon className="-left-px top-px" icon={<ComputerIcon />} lines={["My Computer"]} />
              <DeskIcon className="-left-px top-20" icon={<ComputerIcon globe />} lines={["My Network", "Places"]} />
              <DeskIcon className="left-[154px] top-20" icon={<NotepadIcon size={32} />} lines={["admin 24759", "Able_IB.txt"]} />
              <DeskIcon className="left-[232px] top-20" icon={<ImageFileIcon />} lines={["MACD_zerol..."]} />
              <DeskIcon className="left-[310px] top-20" icon={<ImageFileIcon />} lines={["TTM_swing..."]} />
              <DeskIcon tight className="left-[155px] top-[239px]" icon={<NinjaIcon />} lines={["NinjaTrader"]} />
              <DeskIcon tight className="left-[233px] top-[239px]" icon={<SwirlIcon />} lines={["NinjaTrader 7"]} />
              <DeskIcon className="-left-px top-[713px]" icon={<ComputerIcon />} lines={["Add or Remove", "Programs"]} />
              <DeskIcon className="right-0 top-[791px]" icon={<RecycleIcon />} lines={["Recycle Bin"]} />
              <ReplayBar />
              <ControlCenter />
              <ReplayWindow />
            </div>
            <RemoteTaskbar />
          </div>
        </main>
      </div>
      <div className="flex h-[23px] shrink-0 items-center border-t border-white bg-[#dbd3ce] pl-0.5 pr-[18px]">
        <UserIcon />
        <span className="ml-0.5">User login: ADMIN@DBX8TXC1.domain.local</span>
        <span className="ml-auto">Language: English</span>
      </div>
      <HostTaskbar />
    </div>
  );
}
